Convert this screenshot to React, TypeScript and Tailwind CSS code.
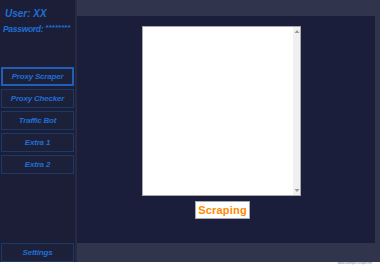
import React from "react";

const navItems = ["Proxy Scraper", "Proxy Checker", "Traffic Bot", "Extra 1", "Extra 2"];

function NavButton({ label, active }: { label: string; active?: boolean }) {
  return (
    <div
      className={
        "mx-[1px] h-[19px] flex items-center justify-center border bg-[#1c2039] text-[8px] font-bold italic text-[#1f6fd6] tracking-[-0.2px] " +
        (active ? "border-2 border-[#1f5fb8]" : "border-[#1b3a68]")
      }
    >
      {label}
    </div>
  );
}

function ScrollArrow({ up }: { up?: boolean }) {
  return (
    <svg width="6" height="5" viewBox="0 0 6 5" className="text-[#9a9a9a]">
      <path d={up ? "M3 1 L5.5 4 L0.5 4 Z" : "M0.5 1 L5.5 1 L3 4 Z"} fill="currentColor" />
    </svg>
  );
}

export default function App() {
  return (
    <div
      className="w-[380px] h-[265px] flex flex-col overflow-hidden"
      style={{ fontFamily: '"Liberation Sans", Arial, sans-serif' }}
    >
      <div className="h-[262px] flex">
        {/* sidebar */}
        <aside className="w-[75px] bg-[#1b1e36] flex flex-col">
          <div className="pl-[5px] pt-[8px] text-[10px] font-bold italic text-[#1f6fd6] leading-[11px]">
            User: XX
          </div>
          <div className="pl-[3px] pt-[5px] text-[8.5px] font-bold italic text-[#1f6fd6] leading-[11px] whitespace-nowrap tracking-[-0.3px]">
            Password: <span className="text-[8px] leading-[8px] align-top tracking-[0px]">********</span>
          </div>
          <div className="mt-[32px] flex flex-col gap-[3px]">
            {navItems.map((n, i) => (
              <NavButton key={n} label={n} active={i === 0} />
            ))}
          </div>
          <div className="flex-1" />
          <NavButton label="Settings" />
        </aside>

        {/* content */}
        <section className="flex-1 bg-[#30344d] border-l-2 border-[#262a42] flex flex-col">
          <div className="mt-[16px] mr-[5px] mb-[19px] flex-1 bg-[#1a1e3a] pl-[65px] pt-[10px] flex flex-col items-start">
            <div className="w-[159px] h-[170px] bg-white border border-[#a6a8b0] flex justify-end">
              <div className="w-[7px] h-full bg-[#f0f0f0] flex flex-col items-center justify-between py-[2px]">
                <ScrollArrow up />
                <ScrollArrow />
              </div>
            </div>
            <button className="mt-[5px] ml-[53px] w-[55px] h-[18px] bg-white border border-[#a6a8b0] flex items-center justify-center text-[11px] font-bold text-[#ff8a00] tracking-[0.2px]">
              Scraping
            </button>
          </div>
        </section>
      </div>
      <div className="h-[3px] bg-white flex justify-end overflow-hidden">
        <span className="mr-[8px] text-[3px] leading-[3px] text-[#8a8a9a] whitespace-nowrap">
          www.example-scraper.net
        </span>
      </div>
    </div>
  );
}
